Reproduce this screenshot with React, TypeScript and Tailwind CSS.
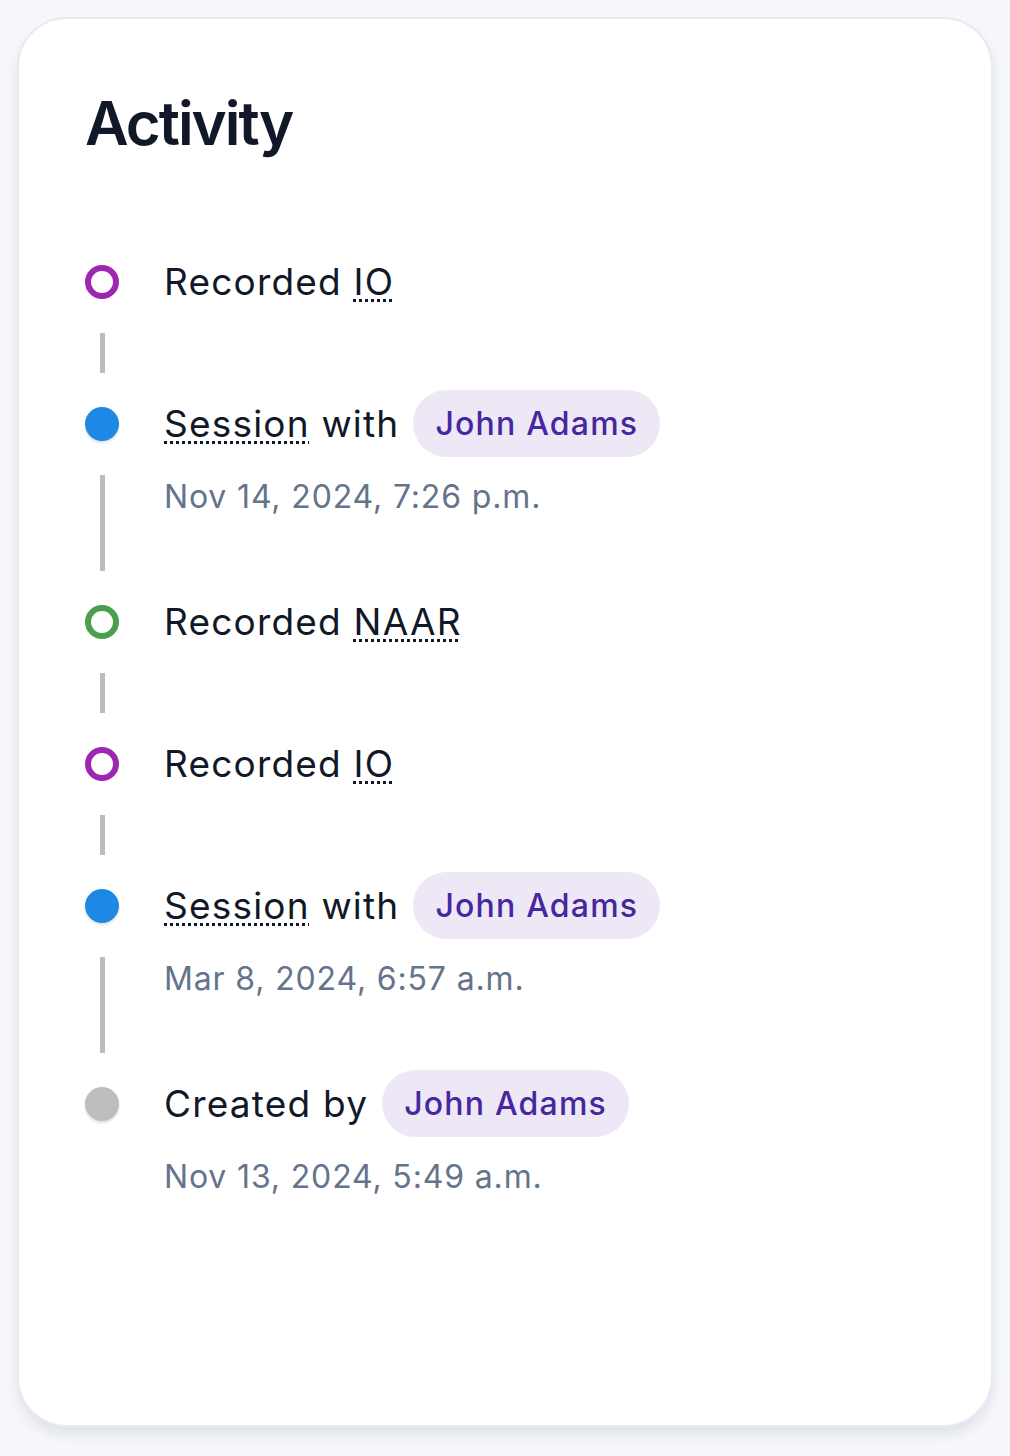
import React from "react";

type DotKind = "outlinedPurple" | "outlinedGreen" | "filledBlue" | "filledGrey";

interface ActivityItem {
  dot: DotKind;
  prefix: string;
  abbr?: string;
  suffix?: string;
  person?: string;
  date?: string;
}

const items: ActivityItem[] = [
  { dot: "outlinedPurple", prefix: "Recorded", abbr: "IO" },
  { dot: "filledBlue", prefix: "", abbr: "Session", suffix: "with", person: "John Adams", date: "Nov 14, 2024, 7:26 p.m." },
  { dot: "outlinedGreen", prefix: "Recorded", abbr: "NAAR" },
  { dot: "outlinedPurple", prefix: "Recorded", abbr: "IO" },
  { dot: "filledBlue", prefix: "", abbr: "Session", suffix: "with", person: "John Adams", date: "Mar 8, 2024, 6:57 a.m." },
  { dot: "filledGrey", prefix: "Created by", person: "John Adams", date: "Nov 13, 2024, 5:49 a.m." },
];

function Dot({ kind }: { kind: DotKind }) {
  if (kind === "outlinedPurple")
    return <span className="my-[34px] block h-[34px] w-[34px] shrink-0 rounded-full border-[6px] border-[#9c27b0]" />;
  if (kind === "outlinedGreen")
    return <span className="my-[34px] block h-[34px] w-[34px] shrink-0 rounded-full border-[6px] border-[#4a9f4e]" />;
  if (kind === "filledBlue")
    return <span className="my-[34px] block h-[34px] w-[34px] shrink-0 rounded-full bg-[#1e88e5] shadow-[0_2px_3px_rgba(0,0,0,0.12)]" />;
  return <span className="my-[34px] block h-[34px] w-[34px] shrink-0 rounded-full bg-[#bdbdc0] shadow-[0_2px_3px_rgba(0,0,0,0.12)]" />;
}

function Abbr({ children }: { children: React.ReactNode }) {
  return (
    <span className="underline decoration-dotted decoration-[3px] underline-offset-[4px]">{children}</span>
  );
}

export default function App() {
  return (
    <div
      className="min-h-screen bg-[#f6f7fb] p-[17px]"
      style={{ fontFamily: "Inter, 'Noto Sans', sans-serif" }}
    >
      <div className="h-[1410px] rounded-[50px] border-2 border-[#e8eaf1] bg-white px-[66px] pt-[68px] shadow-[0_8px_12px_rgba(20,30,70,0.09)]">
        <h1 className="text-[60px] leading-[72px] font-semibold tracking-[-2px] text-[#111827]">Activity</h1>

        <div className="mt-[72px] flex flex-col">
          {items.map((it, i) => {
            const last = i === items.length - 1;
            return (
              <div key={i} className="flex min-h-[142px]">
                <div className="flex w-[34px] flex-col items-center">
                  <Dot kind={it.dot} />
                  {!last && <span className="block w-[5px] flex-1 bg-[#bdbdc0]" />}
                </div>
                <div className={`ml-[45px] pt-[17px] ${it.date ? "pb-[50px]" : ""}`}>
                  <div className="flex h-[67px] items-center gap-[14px] text-[37px] tracking-[1.2px] text-[#111827]">
                    <span className="whitespace-pre">
                      {it.prefix}
                      {it.prefix && it.abbr ? " " : ""}
                      {it.abbr && <Abbr>{it.abbr}</Abbr>}
                      {it.suffix ? " " + it.suffix : ""}
                    </span>
                    {it.person && (
                      <span className="inline-flex h-[67px] items-center rounded-full bg-[#ede7f6] px-[22px] text-[32px] font-medium tracking-[1.2px] text-[#4527a0]">
                        {it.person}
                      </span>
                    )}
                  </div>
                  {it.date && (
                    <div className="mt-[16px] text-[32px] leading-[48px] tracking-[0.85px] text-[#64748b]">{it.date}</div>
                  )}
                </div>
              </div>
            );
          })}
        </div>
      </div>
    </div>
  );
}
